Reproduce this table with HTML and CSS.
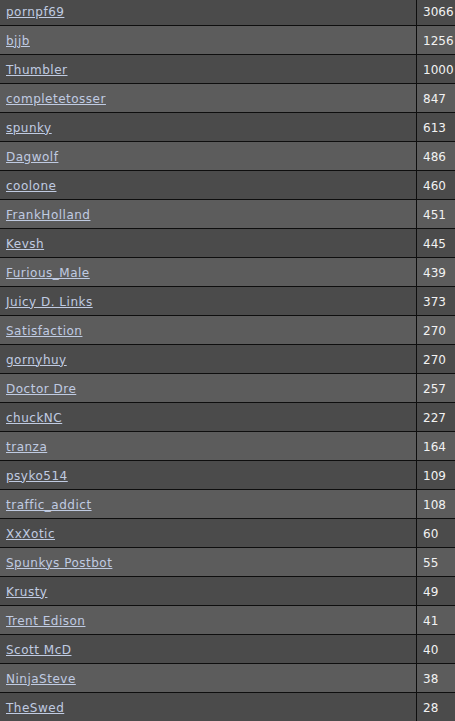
FILE: index.html
```html
<!DOCTYPE html>
<html lang="en">
<head>
    <meta charset="UTF-8">
    <title>Top Posters</title>
    <link rel="stylesheet" href="styles.css">
</head>
<body>
    <table class="ranking">
        <tr><td class="name"><a href="#">pornpf69</a></td><td class="count">3066</td></tr>
        <tr><td class="name"><a href="#">bjjb</a></td><td class="count">1256</td></tr>
        <tr><td class="name"><a href="#">Thumbler</a></td><td class="count">1000</td></tr>
        <tr><td class="name"><a href="#">completetosser</a></td><td class="count">847</td></tr>
        <tr><td class="name"><a href="#">spunky</a></td><td class="count">613</td></tr>
        <tr><td class="name"><a href="#">Dagwolf</a></td><td class="count">486</td></tr>
        <tr><td class="name"><a href="#">coolone</a></td><td class="count">460</td></tr>
        <tr><td class="name"><a href="#">FrankHolland</a></td><td class="count">451</td></tr>
        <tr><td class="name"><a href="#">Kevsh</a></td><td class="count">445</td></tr>
        <tr><td class="name"><a href="#">Furious_Male</a></td><td class="count">439</td></tr>
        <tr><td class="name"><a href="#">Juicy D. Links</a></td><td class="count">373</td></tr>
        <tr><td class="name"><a href="#">Satisfaction</a></td><td class="count">270</td></tr>
        <tr><td class="name"><a href="#">gornyhuy</a></td><td class="count">270</td></tr>
        <tr><td class="name"><a href="#">Doctor Dre</a></td><td class="count">257</td></tr>
        <tr><td class="name"><a href="#">chuckNC</a></td><td class="count">227</td></tr>
        <tr><td class="name"><a href="#">tranza</a></td><td class="count">164</td></tr>
        <tr><td class="name"><a href="#">psyko514</a></td><td class="count">109</td></tr>
        <tr><td class="name"><a href="#">traffic_addict</a></td><td class="count">108</td></tr>
        <tr><td class="name"><a href="#">XxXotic</a></td><td class="count">60</td></tr>
        <tr><td class="name"><a href="#">Spunkys Postbot</a></td><td class="count">55</td></tr>
        <tr><td class="name"><a href="#">Krusty</a></td><td class="count">49</td></tr>
        <tr><td class="name"><a href="#">Trent Edison</a></td><td class="count">41</td></tr>
        <tr><td class="name"><a href="#">Scott McD</a></td><td class="count">40</td></tr>
        <tr><td class="name"><a href="#">NinjaSteve</a></td><td class="count">38</td></tr>
        <tr><td class="name"><a href="#">TheSwed</a></td><td class="count">28</td></tr>
    </table>
</body>
</html>
```

FILE: styles.css
```css
body {
    margin: 0;
    background: #4b4b4b;
    overflow: hidden;
    font-family: "DejaVu Sans", Verdana, sans-serif;
    font-size: 12px;
}
.ranking {
    border-collapse: collapse;
    width: 455px;
    margin-top: -3px;
    table-layout: fixed;
}
.ranking tr {
    background: #4b4b4b;
}
.ranking tr:nth-child(even) {
    background: #5c5c5c;
}
.ranking td {
    height: 27px;
    padding: 1px 5px 0 6px;
    border-bottom: 1px solid #0e0e0e;
    white-space: nowrap;
    overflow: hidden;
}
.ranking tr:last-child td {
    border-bottom: none;
}
.name {
    width: 405px;
}
.name a {
    color: #c0cbe2;
    letter-spacing: 0.5px;
    text-decoration: underline;
}
.count {
    border-left: 1px solid #0e0e0e;
    color: #f2f2f2;
    padding-left: 7px;
}
```
